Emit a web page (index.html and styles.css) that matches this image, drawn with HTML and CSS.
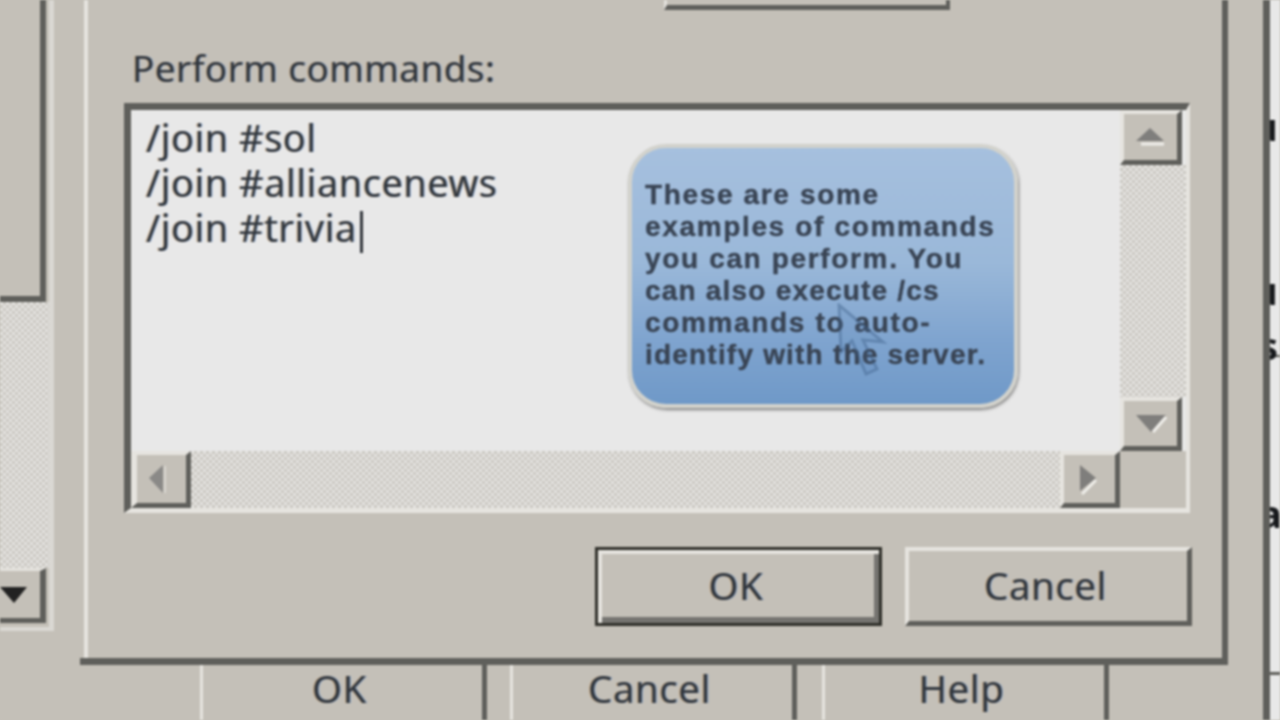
FILE: index.html
```html
<!DOCTYPE html>
<html lang="en">
<head>
<meta charset="utf-8">
<title>Perform commands</title>
<link rel="stylesheet" href="styles.css">
</head>
<body>
<div class="stage">
  <aside class="left-window">
    <div class="left-pane"></div>
    <div class="dither left-track"></div>
    <div class="left-down">
      <svg class="icon" width="28" height="16" viewBox="0 0 28 16"><path d="M0 0H27L14 16Z" fill="#222"/></svg>
    </div>
  </aside>

  <main class="dialog">
    <div class="face">
      <div class="top-button"></div>
      <div class="label ui-text">Perform commands:</div>
      <div class="edit">
        <div class="editor ui-text">
          <div>/join #sol</div>
          <div>/join #alliancenews</div>
          <div>/join #trivia<span class="caret"></span></div>
        </div>
        <div class="vscroll">
          <div class="sbtn sbtn-up">
            <svg class="icon" width="32" height="20" viewBox="0 0 32 20"><path d="M6 17H29" stroke="#efeeea" stroke-width="3"/><path d="M15 1L29 14H1Z" fill="#7f7e7c"/></svg>
          </div>
          <div class="dither vtrack"></div>
          <div class="sbtn sbtn-down">
            <svg class="icon" width="32" height="20" viewBox="0 0 32 20"><path d="M1 1H31L16 18Z" fill="#7f7e7c"/><path d="M31 3L18 18" stroke="#efeeea" stroke-width="3"/></svg>
          </div>
        </div>
        <div class="hscroll">
          <div class="sbtn sbtn-left">
            <svg class="icon" width="20" height="32" viewBox="0 0 20 32"><path d="M2 15L16 2V30Z" fill="#8a8987"/><path d="M18 3V30" stroke="#d8d6d0" stroke-width="2"/></svg>
          </div>
          <div class="dither htrack"></div>
          <div class="sbtn sbtn-right">
            <svg class="icon" width="22" height="32" viewBox="0 0 22 32"><path d="M3 2L19 15L3 28Z" fill="#7f7e7c"/><path d="M19 17L5 31" stroke="#efeeea" stroke-width="3"/></svg>
          </div>
        </div>
        <div class="corner"></div>
        <div class="callout">
          <p class="callout-text">These are some<br>examples of commands<br>you can perform. You<br><span class="tight">can also execute /cs</span><br>commands to auto-<br><span class="tight">identify with the server.</span></p>
          <svg class="pointer" width="52" height="76" viewBox="0 0 52 76"><path d="M3 2L5 49L16 38L30 71L41 66L27 37L47 39Z" fill="rgba(80,120,170,.12)" stroke="#3f5f88" stroke-opacity=".42" stroke-width="3"/></svg>
        </div>
      </div>
      <div class="actions">
        <button class="btn btn-default ui-text">OK</button>
        <button class="btn ui-text">Cancel</button>
      </div>
    </div>
  </main>

  <div class="back-gap"></div>

  <aside class="right-window ui-text">
    <div class="right-top">
      <div class="clip clip-first">u</div>
      <div class="clip clip-second">u</div>
      <div class="clip clip-third">s</div>
    </div>
    <div class="right-mid">
      <div class="clip clip-fourth">a</div>
    </div>
  </aside>

  <footer class="back-buttons">
    <div class="back-btn back-ok ui-text">OK</div>
    <div class="back-btn back-cancel ui-text">Cancel</div>
    <div class="back-btn back-help ui-text">Help</div>
  </footer>
</div>
</body>
</html>
```

FILE: styles.css
```css
* { box-sizing: border-box; }
html, body { margin: 0; width: 1280px; height: 720px; overflow: hidden; background: #c4c0b8; }

.stage {
  width: 1280px;
  height: 720px;
  display: grid;
  grid-template-columns: 80px 1148px 35px 17px;
  grid-template-rows: 665px 55px;
  background: #c4c0b8;
  filter: blur(0.8px);
  overflow: hidden;
}

.ui-text {
  font-family: "Noto Sans", "Open Sans", sans-serif;
  font-size: 38.5px;
  color: #30363e;
  text-shadow: -1.2px 0 0 rgba(190, 130, 60, .45), 1.2px 0 0 rgba(70, 130, 210, .4);
}

.icon { display: block; flex: none; }

.dither {
  background: repeating-conic-gradient(#cbc8c2 0 25%, #e4e3e0 0 50%) 0 0 / 6px 6px;
}

/* left window */
.left-window {
  grid-column: 1;
  grid-row: 1;
  width: 54px;
  height: 631px;
  border-right: 5px solid #dad8d3;
  border-bottom: 4px solid #dad8d3;
  display: flex;
  flex-direction: column;
}
.left-pane {
  width: 46px;
  height: 302px;
  border-right: 6px solid #5f5f5b;
  border-bottom: 6px solid #5f5f5b;
}
.left-track { flex: 1; }
.left-down {
  width: 46px;
  height: 55px;
  margin-bottom: 4px;
  background: #c4c0b8;
  border-top: 3px solid #e4e2dd;
  border-right: 6px solid #5f5f5b;
  border-bottom: 5px solid #5f5f5b;
  padding-top: 16px;
}

/* dialog */
.dialog {
  grid-column: 2;
  grid-row: 1;
  border-right: 6px solid #5f5f5b;
  border-bottom: 7px solid #5f5f5b;
  padding-left: 4px;
}
.face {
  height: 100%;
  border-left: 4px solid #e6e4df;
  padding-left: 36px;
}
.top-button {
  width: 286px;
  height: 10px;
  margin-left: 540px;
  border-left: 3px solid #e4e2dd;
  border-right: 4px solid #5f5f5b;
  border-bottom: 5px solid #5f5f5b;
}
.label {
  height: 44px;
  line-height: 44px;
  margin-top: 36px;
  margin-bottom: 13px;
  margin-left: 8px;
  font-size: 37px;
  letter-spacing: 0.4px;
  white-space: nowrap;
}

/* edit control */
.edit {
  position: relative;
  width: 1066px;
  height: 410px;
  border-top: 7px solid #5f5f5b;
  border-left: 7px solid #5f5f5b;
  border-right: 4px solid #e6e4df;
  border-bottom: 5px solid #e6e4df;
  display: grid;
  grid-template-columns: 989px 66px;
  grid-template-rows: 341px 57px;
}
.editor {
  background: #e8e8e8;
  padding: 5px 0 0 15px;
  font-size: 38px;
  letter-spacing: 0.5px;
  line-height: 45px;
  white-space: nowrap;
}
.caret {
  display: inline-block;
  width: 3px;
  height: 42px;
  margin-left: 3px;
  vertical-align: middle;
  background: #33373c;
}
.vscroll {
  background: #e8e8e8;
  display: flex;
  flex-direction: column;
}
.vtrack { flex: 1; }
.hscroll { display: flex; }
.htrack { flex: 1; }
.corner { background: #c4c0b8; }

.sbtn {
  flex: none;
  display: flex;
  align-items: center;
  justify-content: center;
  background: #c4c0b8;
  border-top: 4px solid #e6e4df;
  border-left: 4px solid #e6e4df;
  border-right: 5px solid #5f5f5b;
  border-bottom: 5px solid #5f5f5b;
}
.sbtn-up { width: 62px; height: 55px; }
.sbtn-down { width: 62px; height: 54px; }
.sbtn-left, .sbtn-right { width: 60px; height: 57px; }
.sbtn-left { border-left-width: 6px; padding-right: 10px; }
.sbtn-right { padding-right: 4px; }

/* callout */
.callout {
  position: absolute;
  left: 497px;
  top: 34px;
  width: 390px;
  height: 264px;
  border: 4px solid #d2d2cc;
  border-radius: 38px;
  background: linear-gradient(#a6c0de 0%, #9ab8d9 45%, #7fa4cf 75%, #6f99c8 100%);
  box-shadow: 1px 2px 3px rgba(70, 70, 70, .6);
  padding: 31px 0 0 13px;
}
.callout-text {
  margin: 0;
  font-family: "Liberation Sans", Arial, sans-serif;
  font-weight: 700;
  font-size: 28px;
  line-height: 32px;
  letter-spacing: 1.65px;
  color: #394454;
  -webkit-text-stroke: 0.4px #394454;
  white-space: nowrap;
}
.tight { letter-spacing: 1.2px; }
.pointer {
  position: absolute;
  left: 204px;
  top: 155px;
}

/* action buttons */
.actions {
  display: flex;
  gap: 23px;
  margin-top: 34px;
  margin-left: 471px;
}
.btn {
  width: 287px;
  height: 79px;
  margin: 0;
  padding: 0 5px 3px 0;
  font-size: 38.5px;
  letter-spacing: 0.5px;
  background: #c4c0b8;
  border-style: solid;
  border-width: 4px 5px 5px 4px;
  border-color: #e6e4df #5f5f5b #5f5f5b #e6e4df;
  border-radius: 0;
}
.btn-default {
  border: 3px solid #2f2f29;
  box-shadow: inset 4px 4px 0 #e6e4df, inset -5px -6px 0 #757470;
}

/* windows behind */
.back-gap { grid-column: 3; grid-row: 1 / span 2; }
.right-window {
  grid-column: 4;
  grid-row: 1 / span 2;
  background: #e8e8e8;
  border-left: 7px solid #5f5f5b;
  overflow: hidden;
  color: #17191c;
  font-size: 38px;
  font-weight: 700;
  text-shadow: none;
}
.right-top {
  height: 357px;
  padding-top: 116px;
  border-bottom: 2px solid #5f5f5b;
}
.right-mid {
  height: 318px;
  padding-top: 146px;
  border-bottom: 3px solid #5f5f5b;
}
.clip {
  height: 20px;
  line-height: 20px;
  margin-left: -17px;
}
.clip-second { margin-top: 144px; }
.clip-third { margin-top: 35px; margin-left: -11px; }
.clip-fourth { margin-left: -11px; }

.back-buttons {
  grid-column: 1 / span 2;
  grid-row: 2;
  display: flex;
  padding-left: 200px;
}
.back-btn {
  height: 55px;
  line-height: 46px;
  text-align: center;
  padding-right: 6px;
  letter-spacing: 0.5px;
  border-left: 3px solid #e6e4df;
  border-right: 5px solid #5f5f5b;
}
.back-ok { width: 287px; }
.back-cancel { width: 287px; margin-left: 23px; }
.back-help { width: 287px; margin-left: 25px; }
```
